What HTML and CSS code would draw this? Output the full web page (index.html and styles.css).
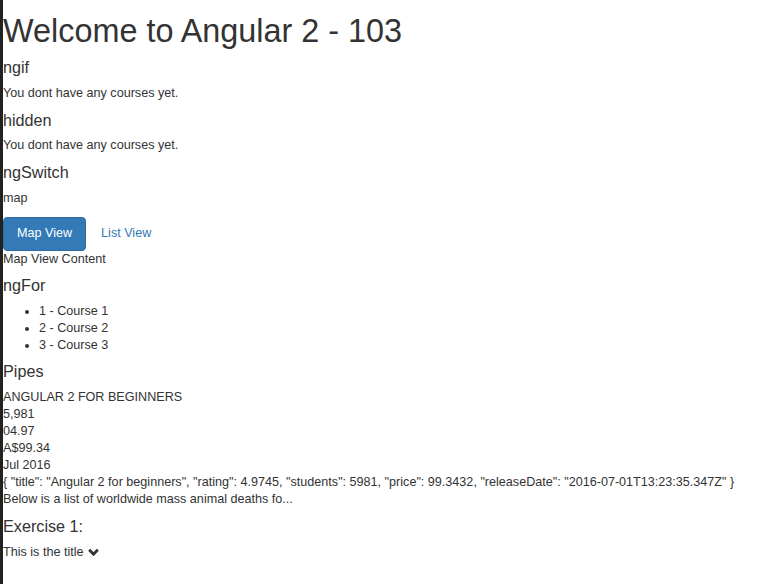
FILE: index.html
```html
<!DOCTYPE html>
<html lang="en">
<head>
<meta charset="utf-8">
<title>Angular 2 - 103</title>
<link rel="stylesheet" href="styles.css">
</head>
<body>
<div class="app">
  <h1 class="title">Welcome to Angular 2 - 103</h1>

  <h4 class="section">ngif</h4>
  <div class="line">You dont have any courses yet.</div>

  <h4 class="section">hidden</h4>
  <div class="line">You dont have any courses yet.</div>

  <h4 class="section">ngSwitch</h4>
  <div class="line">map</div>
  <div class="tabs">
    <button class="btn-primary" type="button">Map View</button>
    <a class="btn-link" href="#">List View</a>
  </div>
  <div class="line">Map View Content</div>

  <h4 class="section">ngFor</h4>
  <ul class="courses">
    <li>1 - Course 1</li>
    <li>2 - Course 2</li>
    <li>3 - Course 3</li>
  </ul>

  <h4 class="section">Pipes</h4>
  <div class="line">ANGULAR 2 FOR BEGINNERS</div>
  <div class="line">5,981</div>
  <div class="line">04.97</div>
  <div class="line">A$99.34</div>
  <div class="line">Jul 2016</div>
  <div class="line">{ "title": "Angular 2 for beginners", "rating": 4.9745, "students": 5981, "price": 99.3432, "releaseDate": "2016-07-01T13:23:35.347Z" }</div>
  <div class="line">Below is a list of worldwide mass animal deaths fo...</div>

  <h4 class="section">Exercise 1:</h4>
  <div class="line">This is the title <svg class="chevron" width="11" height="9" viewBox="0 0 11 9"><path d="M1.2 1.8 L5.5 6.3 L9.8 1.8" fill="none" stroke="#333" stroke-width="2.8" stroke-linecap="butt" stroke-linejoin="miter"/></svg></div>
</div>
</body>
</html>
```

FILE: styles.css
```css
html, body {
  margin: 0;
  padding: 0;
  height: 100%;
}

body {
  background: #fff;
  color: #333;
  font-family: "Liberation Sans", Arial, sans-serif;
  font-size: 12.6px;
  line-height: 17px;
}

.app {
  min-height: 100%;
  box-sizing: border-box;
  border-left: 3px solid #222;
  padding: 14px 0 20px 0;
}

.title {
  margin: 0 0 9.6px 0;
  font-size: 32.4px;
  font-weight: 500;
  line-height: 1.1;
}

.section {
  margin: 9.5px 0 8px 0;
  font-size: 16.2px;
  font-weight: 500;
  line-height: 1.1;
}

.title + .section {
  margin-top: 0;
}

.line {
  white-space: nowrap;
}

.tabs {
  display: flex;
  align-items: center;
  margin-top: 10px;
}

.btn-primary {
  font-family: inherit;
  font-size: 12.6px;
  line-height: 17px;
  padding: 7.5px 13px;
  color: #fff;
  background: #337ab7;
  border: 1px solid #2e6da4;
  border-radius: 4px;
  cursor: pointer;
}

.btn-link {
  color: #337ab7;
  text-decoration: none;
  padding-left: 15px;
}

.courses {
  margin: 0;
  padding-left: 36px;
}

.chevron {
  vertical-align: -1px;
  margin-left: 1px;
}
```
